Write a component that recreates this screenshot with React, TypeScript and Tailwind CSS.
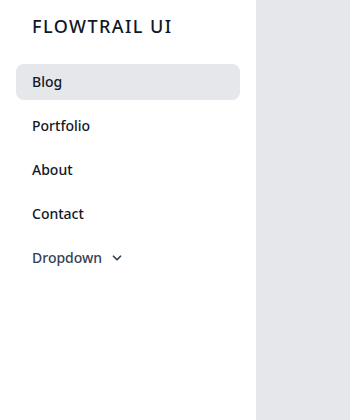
import { ChevronDown } from 'lucide-react';

const links = ['Blog', 'Portfolio', 'About', 'Contact'];

export default function App() {
  return (
    <div
      className="flex h-[420px] w-[350px] bg-gray-200"
      style={{ fontFamily: '"Noto Sans", "Open Sans", sans-serif' }}
    >
      <aside className="flex w-64 flex-col bg-white px-4 pt-3">
        <div className="px-4 text-lg font-medium tracking-[0.08em] text-gray-900">
          FLOWTRAIL UI
        </div>

        <nav className="mt-6 flex flex-col gap-2">
          {links.map((link, i) => (
            <a
              key={link}
              href="#"
              className={`flex h-9 items-center rounded-lg px-4 text-sm font-medium text-gray-900 ${
                i === 0 ? 'bg-gray-200' : ''
              }`}
            >
              {link}
            </a>
          ))}
          <button className="flex h-9 items-center gap-2 px-4 text-sm font-medium text-gray-700">
            Dropdown
            <ChevronDown className="h-3.5 w-3.5" strokeWidth={3} />
          </button>
        </nav>
      </aside>
    </div>
  );
}
